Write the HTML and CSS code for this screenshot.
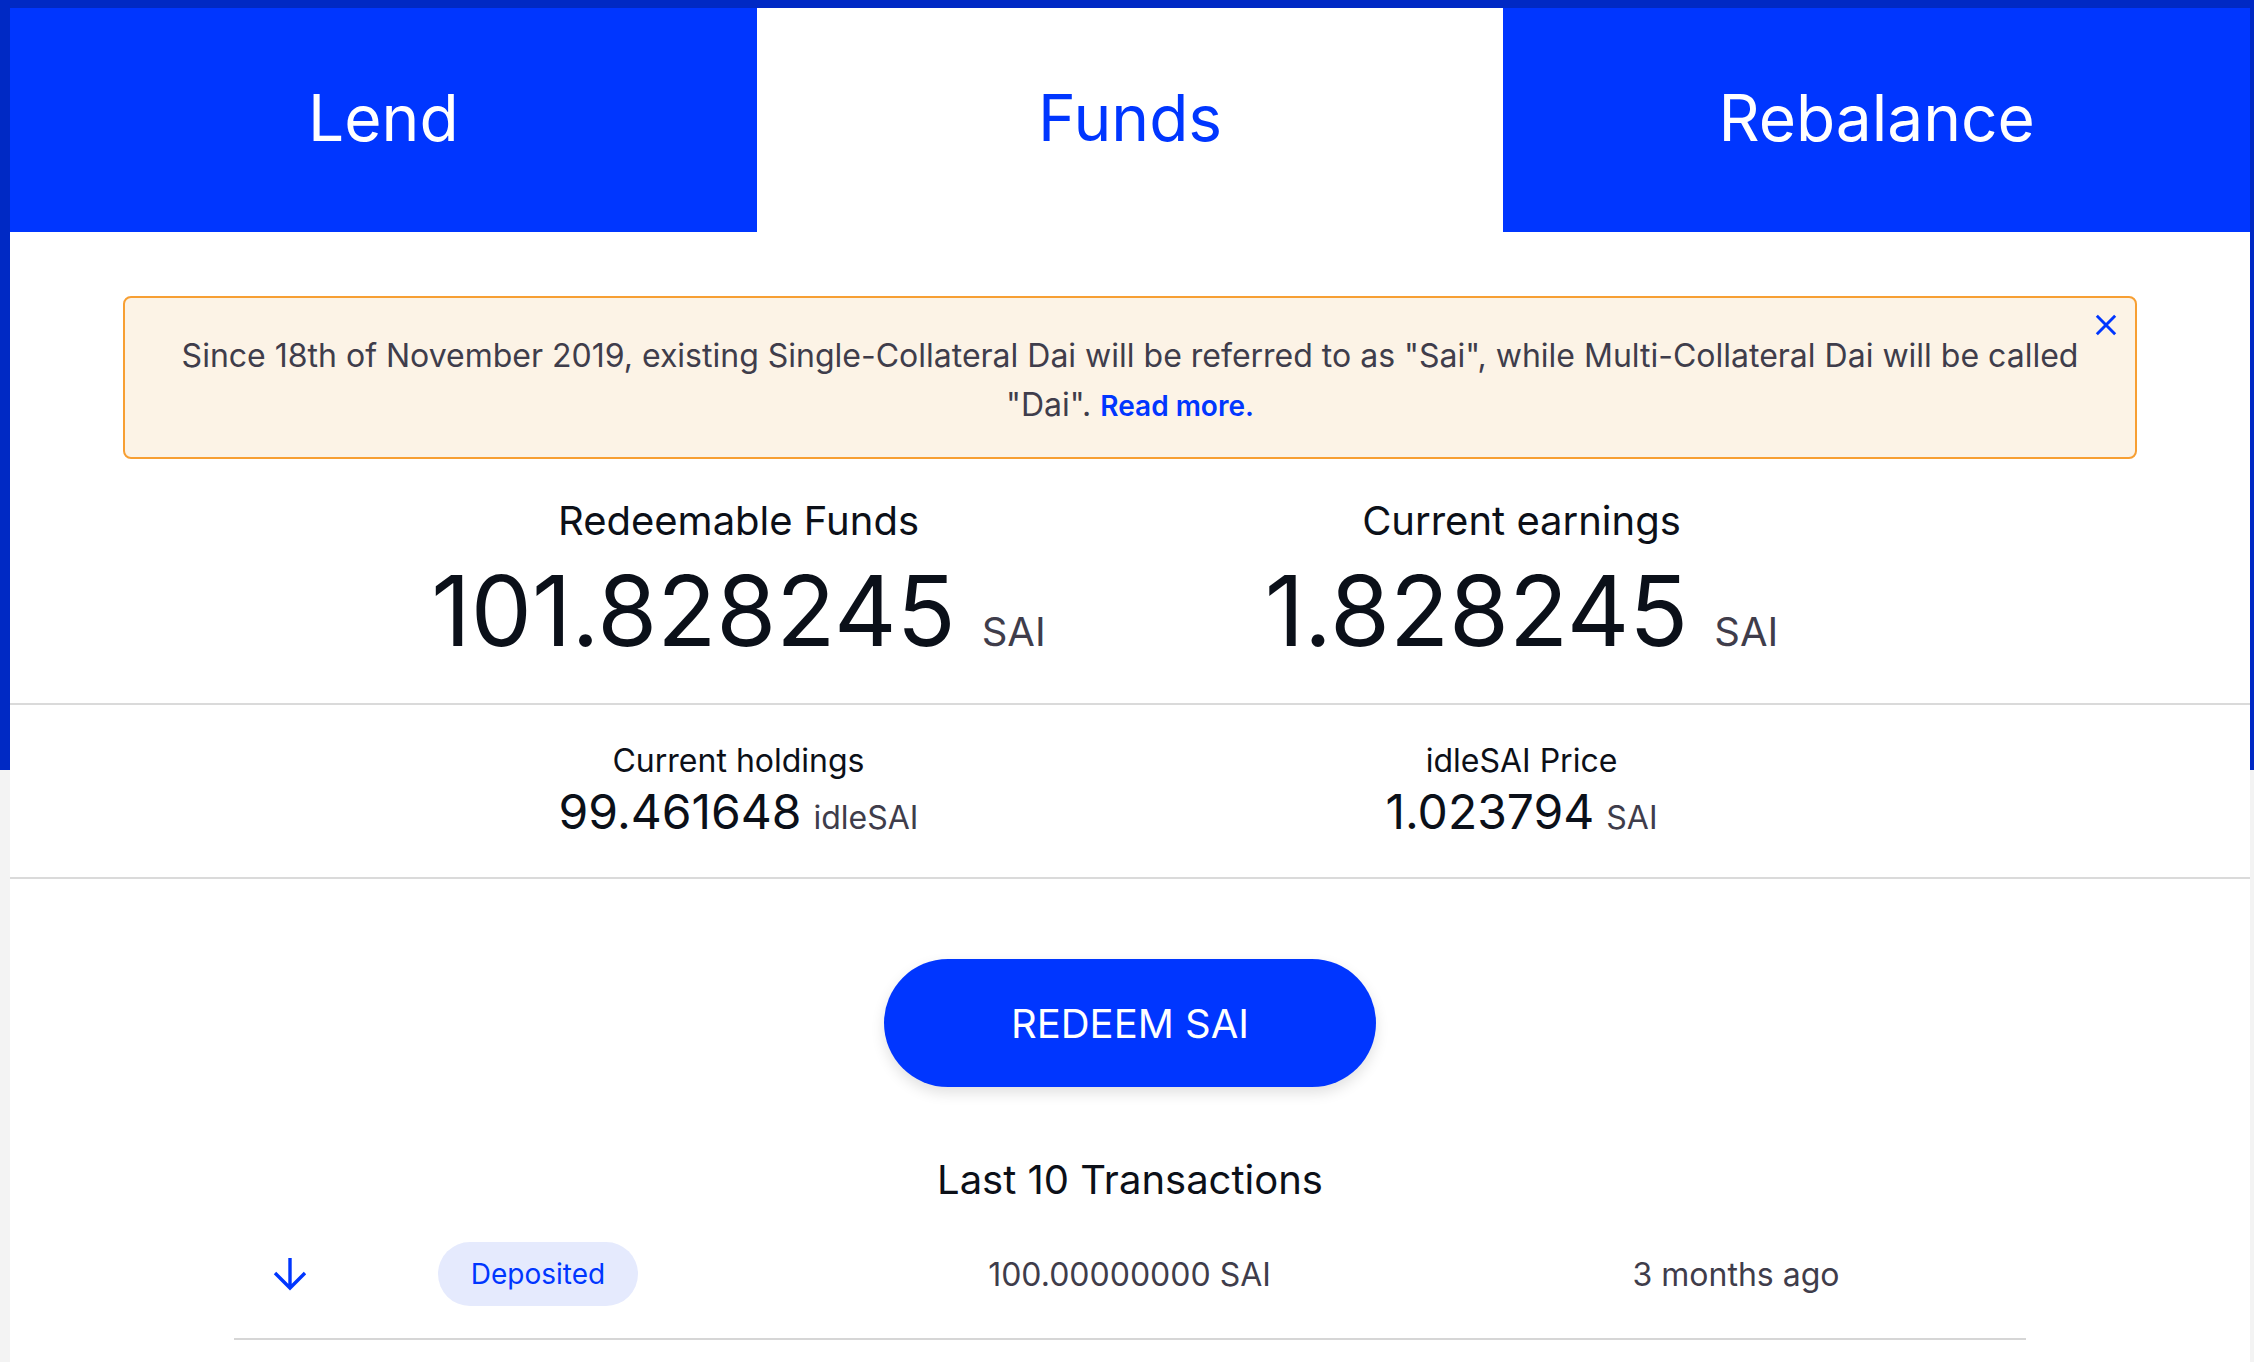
FILE: index.html
```html
<!DOCTYPE html>
<html lang="en">
<head>
<meta charset="utf-8">
<title>Funds</title>
<link rel="stylesheet" href="styles.css">
</head>
<body>
<div class="card">
  <nav class="tabs">
    <div class="tab">Lend</div>
    <div class="tab active">Funds</div>
    <div class="tab">Rebalance</div>
  </nav>
  <div class="content">
    <div class="alert">
      <p class="alert-text">Since 18th of November 2019, existing Single-Collateral Dai will be referred to as "Sai", while Multi-Collateral Dai will be called<br>"Dai". <a class="alert-link" href="#">Read more.</a></p>
      <button class="alert-close" aria-label="Close">
        <svg viewBox="0 0 24 24" width="22" height="22"><path d="M2 2 L22 22 M22 2 L2 22" stroke="#0036ff" stroke-width="3.2" fill="none"/></svg>
      </button>
    </div>

    <section class="stats stats-main">
      <div class="stat">
        <div class="stat-label">Redeemable Funds</div>
        <div class="stat-value"><span class="num">101.828245</span><span class="unit">SAI</span></div>
      </div>
      <div class="stat">
        <div class="stat-label">Current earnings</div>
        <div class="stat-value"><span class="num">1.828245</span><span class="unit">SAI</span></div>
      </div>
    </section>

    <section class="stats stats-small">
      <div class="stat">
        <div class="stat-label">Current holdings</div>
        <div class="stat-value"><span class="num">99.461648</span><span class="unit">idleSAI</span></div>
      </div>
      <div class="stat">
        <div class="stat-label">idleSAI Price</div>
        <div class="stat-value"><span class="num">1.023794</span><span class="unit">SAI</span></div>
      </div>
    </section>

    <div class="actions">
      <button class="redeem">REDEEM SAI</button>
    </div>

    <h2 class="tx-title">Last 10 Transactions</h2>
    <div class="tx-list">
      <div class="tx-row">
        <div class="tx-icon">
          <svg viewBox="0 0 34 34" width="34" height="34"><path d="M17 1 V31 M2 16 L17 31 L32 16" stroke="#0036ff" stroke-width="3.4" fill="none"/></svg>
        </div>
        <div class="tx-status"><span class="pill">Deposited</span></div>
        <div class="tx-amount">100.00000000 SAI</div>
        <div class="tx-date">3 months ago</div>
      </div>
    </div>
  </div>
</div>
</body>
</html>
```

FILE: styles.css
```css
* { box-sizing: border-box; }

html, body {
  margin: 0;
  padding: 0;
}

body {
  height: 1362px;
  overflow: hidden;
  font-family: Inter, "Noto Sans", sans-serif;
  background: linear-gradient(to bottom, #0029c4 0, #0029c4 770px, #f3f3f3 770px);
  padding: 8px 4px 0 10px;
}

.card {
  background: #ffffff;
  height: 1354px;
  overflow: hidden;
}

.tabs {
  display: flex;
  height: 224px;
}

.tab {
  flex: 1;
  display: flex;
  align-items: center;
  justify-content: center;
  padding-bottom: 6px;
  background: #0036ff;
  color: #ffffff;
  font-size: 64px;
  font-weight: 400;
}

.tab.active {
  background: #ffffff;
  color: #0036ff;
}

.content {
  padding-top: 64px;
}

.alert {
  position: relative;
  margin: 0 113px;
  border: 2px solid #f79f33;
  border-radius: 8px;
  background: #fcf3e6;
  padding: 33px 40px 28px;
}

.alert-text {
  margin: 0;
  text-align: center;
  font-size: 32px;
  line-height: 49px;
  color: #3f3d4b;
}

.alert-link {
  color: #0036ff;
  font-size: 28px;
  line-height: 1;
  font-weight: 600;
  text-decoration: none;
}

.alert-close {
  position: absolute;
  top: 16px;
  right: 18px;
  padding: 0;
  border: 0;
  background: none;
  line-height: 0;
  cursor: pointer;
}

.stats {
  display: flex;
  justify-content: center;
  border-bottom: 2px solid #dadada;
}

.stat {
  width: 783px;
  text-align: center;
}

.unit {
  line-height: 1;
  color: #3f3d4b;
}

.num {
  color: #0b1019;
}

.stat-label {
  color: #0c1018;
}

.stats-main {
  padding-top: 39px;
  padding-bottom: 35px;
}

.stats-main .stat-label {
  font-size: 40px;
  line-height: 46px;
}

.stats-main .stat-value {
  margin-top: 9px;
  font-size: 97px;
  line-height: 115px;
}

.stats-main .unit {
  font-size: 40px;
  margin-left: 26px;
}

.stats-small {
  padding-top: 37px;
  padding-bottom: 37px;
}

.stats-small .stat-label {
  font-size: 32px;
  line-height: 38px;
}

.stats-small .stat-value {
  margin-top: 4px;
  font-size: 48px;
  line-height: 56px;
}

.stats-small .unit {
  font-size: 32px;
  margin-left: 12px;
}

.actions {
  display: flex;
  justify-content: center;
  padding-top: 80px;
}

.redeem {
  width: 492px;
  height: 128px;
  border: 0;
  border-radius: 64px;
  background: #0036ff;
  color: #ffffff;
  font-family: Inter, "Noto Sans", sans-serif;
  font-size: 40px;
  font-weight: 400;
  box-shadow: 0 6px 14px rgba(0, 0, 0, 0.12);
  cursor: pointer;
}

.tx-title {
  margin: 69px 0 0;
  text-align: center;
  font-size: 40px;
  line-height: 48px;
  font-weight: 400;
  color: #0c1018;
}

.tx-list {
  width: 1792px;
  margin: 0 auto;
}

.tx-row {
  display: grid;
  grid-template-columns: 112px 481px 605px 594px;
  align-items: center;
  padding: 38px 0 32px;
  border-bottom: 2px solid #d6d6d6;
}

.tx-icon {
  display: flex;
  justify-content: center;
  line-height: 0;
}

.tx-status {
  padding-left: 92px;
}

.pill {
  display: inline-flex;
  align-items: center;
  justify-content: center;
  width: 200px;
  height: 64px;
  border-radius: 32px;
  background: #e5eafd;
  color: #0036ff;
  font-size: 28px;
}

.tx-amount,
.tx-date {
  text-align: center;
  font-size: 32px;
  color: #3f3d4b;
}

.tx-date {
  padding-left: 14px;
}
```
